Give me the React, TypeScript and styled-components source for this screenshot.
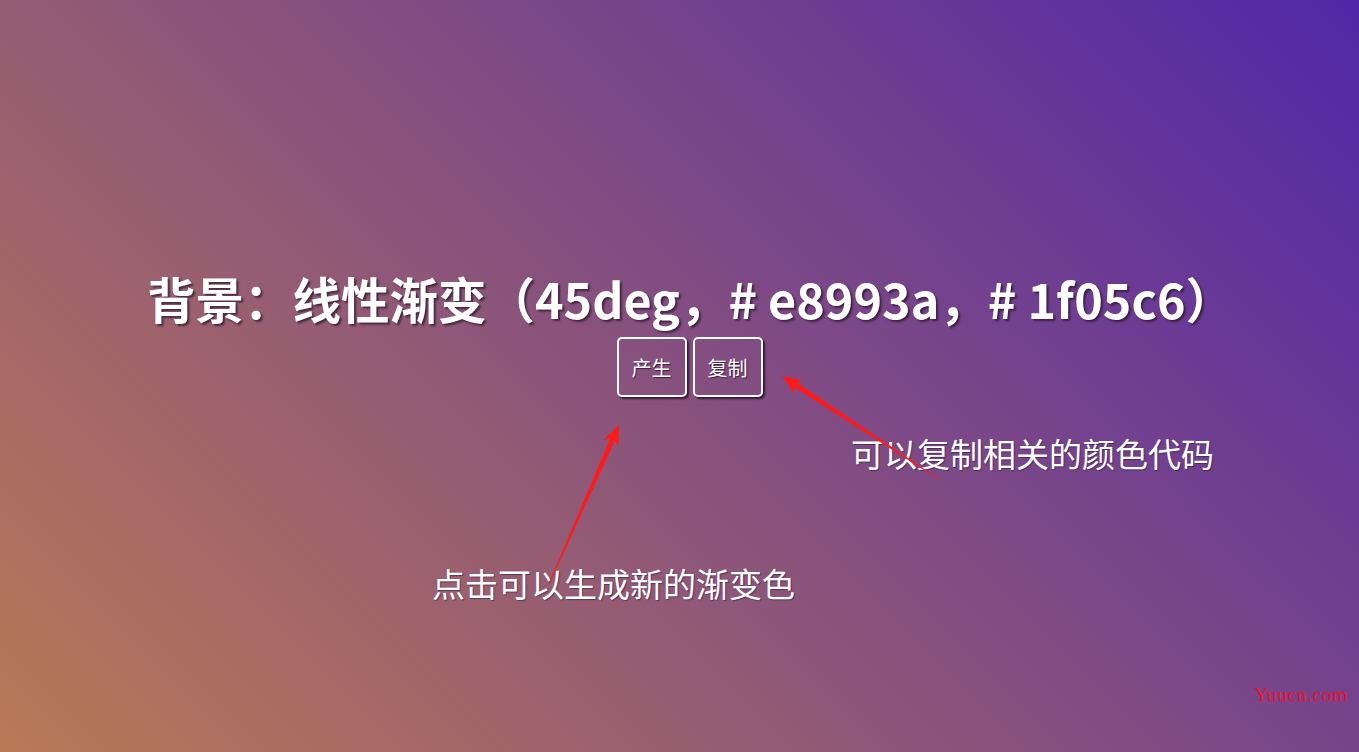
import React from "react";
import styled, { createGlobalStyle } from "styled-components";

const Global = createGlobalStyle`
  html, body { margin: 0; padding: 0; height: 100%; }
  body {
    font-family: "Microsoft YaHei", "Noto Sans CJK SC", "Noto Sans", sans-serif;
    overflow: hidden;
  }
`;

const Page = styled.div`
  position: relative;
  width: 100vw;
  height: 100vh;
  background: linear-gradient(45deg, #ba7956 0%, #86507f 50%, #5127a8 100%);
  display: flex;
  flex-direction: column;
  align-items: center;
  padding-top: 266px;
  box-sizing: border-box;
`;

const Title = styled.h1`
  margin: 0;
  padding-left: 22px;
  color: #fff;
  font-family: "Noto Sans CJK SC", sans-serif;
  font-size: 48.5px;
  font-weight: 600;
  line-height: 64px;
  text-shadow: 2px 2px 2px rgba(40, 20, 40, 0.7);
  white-space: nowrap;
`;

const Buttons = styled.div`
  display: flex;
  gap: 6px;
  margin-top: 7px;
  padding-left: 20px;
`;

const Btn = styled.button`
  width: 70px;
  height: 60px;
  box-sizing: border-box;
  background: transparent;
  border: 2px solid #fff;
  border-radius: 5px;
  box-shadow: 2px 2px 2px rgba(20, 10, 30, 0.75);
  color: #fff;
  font-family: "Noto Sans CJK SC", sans-serif;
  font-size: 20px;
  text-shadow: 1px 1px 1px rgba(20, 10, 30, 0.7);
  cursor: pointer;
  padding: 0;
`;

const Note = styled.div<{ $x: number; $y: number }>`
  position: absolute;
  left: ${(p) => p.$x}px;
  top: ${(p) => p.$y}px;
  color: #fff;
  font-family: "Noto Sans CJK SC", sans-serif;
  font-size: 33px;
  line-height: 40px;
  white-space: nowrap;
  text-shadow: 1px 1px 1px rgba(30, 20, 60, 0.5);
`;

const Overlay = styled.svg`
  position: absolute;
  left: 0;
  top: 0;
  width: 100%;
  height: 100%;
  pointer-events: none;
`;

const Watermark = styled.div`
  position: absolute;
  right: 11px;
  bottom: 46px;
  color: #f0102a;
  font-family: "Liberation Serif", serif;
  font-size: 19.5px;
  letter-spacing: 0.6px;
`;

function arrow(x1: number, y1: number, x2: number, y2: number, headLen = 20, headW = 8, neckW = 2.6, tailW = 0.4) {
  const dx = x2 - x1;
  const dy = y2 - y1;
  const L = Math.hypot(dx, dy);
  const ux = dx / L;
  const uy = dy / L;
  const nx = -uy;
  const ny = ux;
  const neckX = x2 - ux * headLen;
  const neckY = y2 - uy * headLen;
  const notchX = x2 - ux * (headLen - 4);
  const notchY = y2 - uy * (headLen - 4);
  const pts = [
    [x1 + nx * tailW, y1 + ny * tailW],
    [notchX + nx * neckW, notchY + ny * neckW],
    [neckX + nx * headW, neckY + ny * headW],
    [x2, y2],
    [neckX - nx * headW, neckY - ny * headW],
    [notchX - nx * neckW, notchY - ny * neckW],
    [x1 - nx * tailW, y1 - ny * tailW],
  ];
  return pts.map((p) => `${p[0].toFixed(1)},${p[1].toFixed(1)}`).join(" ");
}

export default function App() {
  return (
    <>
      <Global />
      <Page>
        <Title>背景：线性渐变（45deg，# e8993a，# 1f05c6）</Title>
        <Buttons>
          <Btn>产生</Btn>
          <Btn>复制</Btn>
        </Buttons>
        <Note $x={851} $y={433}>可以复制相关的颜色代码</Note>
        <Note $x={432} $y={563}>点击可以生成新的渐变色</Note>
        <Overlay viewBox="0 0 1359 752">
          <polygon points={arrow(549, 584, 619, 425)} fill="#ff1a1a" />
          <polygon points={arrow(940, 480, 782, 376)} fill="#ff1a1a" />
        </Overlay>
        <Watermark>Yuucn.com</Watermark>
      </Page>
    </>
  );
}
